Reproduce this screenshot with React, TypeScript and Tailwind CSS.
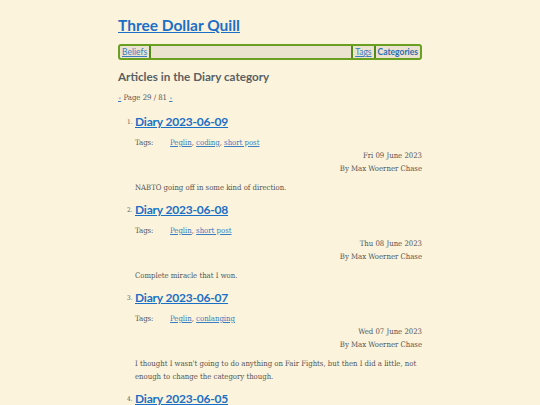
import React from "react";

const sans = { fontFamily: 'Lato, "Noto Sans", sans-serif' };
const serif = { fontFamily: '"DejaVu Serif Condensed", "DejaVu Serif", serif', fontStretch: "condensed" as const };

type Post = { n: number; title: string; tags: string[]; date: string; summary: string };

const posts: Post[] = [
  { n: 1, title: "Diary 2023-06-09", tags: ["Peglin", "coding", "short post"], date: "Fri 09 June 2023", summary: "NABTO going off in some kind of direction." },
  { n: 2, title: "Diary 2023-06-08", tags: ["Peglin", "short post"], date: "Thu 08 June 2023", summary: "Complete miracle that I won." },
  { n: 3, title: "Diary 2023-06-07", tags: ["Peglin", "conlanging"], date: "Wed 07 June 2023", summary: "I thought I wasn't going to do anything on Fair Fights, but then I did a little, not enough to change the category though." },
  { n: 4, title: "Diary 2023-06-05", tags: ["Peglin"], date: "Mon 05 June 2023", summary: "" },
];

export default function App() {
  return (
    <div className="h-[405px] overflow-hidden bg-[#fbf3dc] text-[#555]">
      <div className="mx-auto w-[304px] pt-[14px]">
        <h1 className="text-[15.5px] font-bold leading-[23px] text-[#1c6fc6] underline" style={sans}>Three Dollar Quill</h1>
        <nav className="mt-[7px] flex h-[16px] items-stretch rounded-[3px] border-2 border-[#6aa022] bg-[#ebe3cf] text-[8.5px] leading-[12px]" style={sans}>
          <a className="border-r-2 border-[#4f8a1a] px-[2px] text-[#3a7dc0] underline">Beliefs</a>
          <div className="flex-1" />
          <a className="border-l-2 border-[#4f8a1a] px-[2px] text-[#3a7dc0] underline">Tags</a>
          <a className="border-l-2 border-[#4f8a1a] px-[2px] font-bold text-[#2b6cb0]">Categories</a>
        </nav>
        <h2 className="mt-[7px] text-[11.7px] font-bold leading-[18px] text-[#5a5f63]" style={sans}>Articles in the Diary category</h2>
        <p className="mt-[7px] text-[7.7px] leading-[12px]" style={serif}>
          <a className="text-[#3a7dc0] underline text-[6px]">«</a> Page 29 / 81 <a className="text-[#3a7dc0] underline text-[6px]">»</a>
        </p>
        <ol className="mt-[9px]">
          {posts.map((p) => (
            <li key={p.n} className="flex">
              <span className="w-[17px] shrink-0 pt-[5px] pl-[9px] text-[6.5px]" style={serif}>{p.n}.</span>
              <div className="flex-1">
                <a className="block text-[12px] font-bold leading-[18px] tracking-[-0.2px] text-[#1c6fc6] underline" style={sans}>{p.title}</a>
                <div className="mt-[6px] flex text-[7.7px] leading-[12px]" style={serif}>
                  <span className="w-[35px]">Tags:</span>
                  <span>
                    {p.tags.map((t, i) => (
                      <span key={t}>
                        <a className="text-[#3a7dc0] underline">{t}</a>
                        {i < p.tags.length - 1 ? ", " : ""}
                      </span>
                    ))}
                  </span>
                </div>
                <div className="mt-[1px] text-right text-[7.7px] leading-[12.5px]" style={serif}>
                  <div>{p.date}</div>
                  <div>By Max Woerner Chase</div>
                </div>
                <p className="mt-[6px] mb-[7px] text-[7.7px] leading-[13px]" style={serif}>{p.summary}</p>
              </div>
            </li>
          ))}
        </ol>
      </div>
    </div>
  );
}
